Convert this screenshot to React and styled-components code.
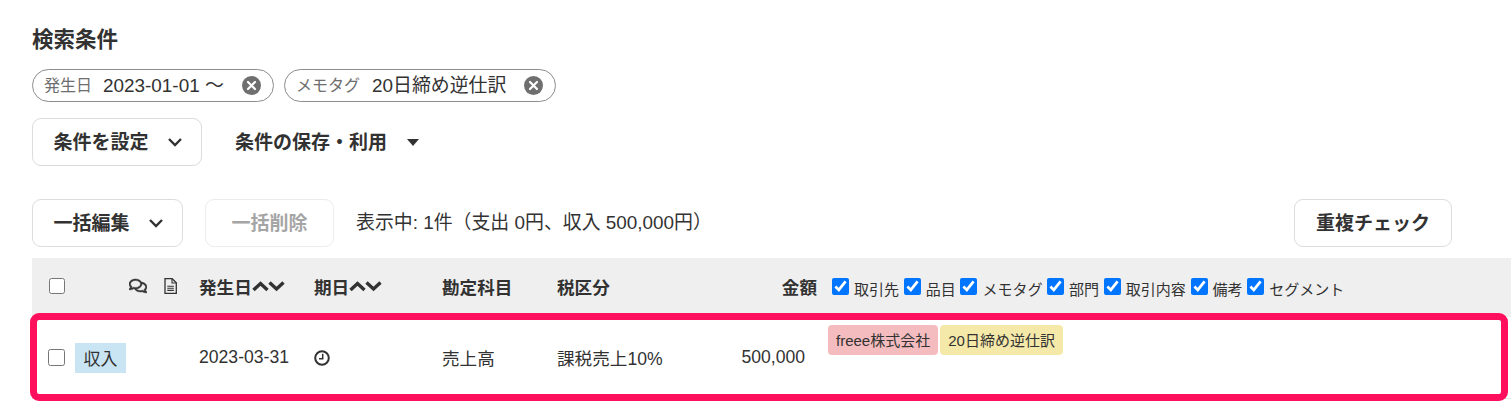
import React from 'react';
import styled, { createGlobalStyle } from 'styled-components';
import { FaRegComments } from 'react-icons/fa';

const GlobalStyle = createGlobalStyle`
  html, body {
    margin: 0;
    padding: 0;
    background: #fff;
  }
  body {
    font-family: "Liberation Sans", "Noto Sans CJK JP", sans-serif;
    color: #323232;
    overflow: hidden;
  }
`;

const Page = styled.div`
  width: 1511px;
  height: 406px;
  box-sizing: border-box;
  padding: 28px 0 0 32px;
`;

const Heading = styled.h2`
  margin: 0;
  font-size: 21.5px;
  line-height: 24px;
  font-weight: 700;
`;

const ChipRow = styled.div`
  display: flex;
  gap: 10px;
  margin-top: 17px;
`;

const Chip = styled.div`
  display: flex;
  align-items: center;
  box-sizing: border-box;
  width: ${(p) => p.$width}px;
  height: 33px;
  padding: 0 12px 0 11px;
  border: 1px solid #8c8c8c;
  border-radius: 17px;
`;

const ChipLabel = styled.span`
  font-size: 16px;
  color: #6e6e6e;
  margin-right: ${(p) => p.$gap}px;
  padding-bottom: 3px;
`;

const ChipValue = styled.span`
  font-size: 18.9px;
  flex: 1;
  white-space: nowrap;
  padding-bottom: 5px;
`;

const ButtonRow = styled.div`
  display: flex;
  align-items: center;
  margin-top: 16px;
`;

const Toolbar = styled(ButtonRow)`
  margin-top: 33px;
  padding-right: 59px;
`;

const Button = styled.button`
  display: flex;
  align-items: center;
  justify-content: center;
  box-sizing: border-box;
  height: 48px;
  width: ${(p) => p.$width}px;
  padding: 0 0 4px;
  background: #fff;
  border: 1px solid ${(p) => (p.disabled ? '#ececec' : '#dcdcdc')};
  border-radius: 9px;
  font-family: inherit;
  font-size: 19px;
  font-weight: 700;
  color: ${(p) => (p.disabled ? '#a5a5a5' : '#323232')};
`;

const MenuButton = styled(Button)`
  padding-left: 2px;
`;

const PlainButton = styled(Button)`
  border: none;
  margin-left: 33px;
  justify-content: flex-start;
`;

const Caret = styled.svg`
  margin-left: ${(p) => p.$gap}px;
  margin-top: 4px;
`;

const Summary = styled.span`
  font-size: 18.9px;
  margin-left: 22px;
  flex: 1;
  white-space: nowrap;
  padding-bottom: 5px;
`;

const DeleteButton = styled(Button)`
  margin-left: 22px;
`;

const Table = styled.div`
  margin-top: 11px;
`;

const HeaderRow = styled.div`
  display: flex;
  align-items: center;
  height: 59px;
  padding-bottom: 3px;
  box-sizing: border-box;
  background: #efefef;
`;

const BodyWrap = styled.div`
  position: relative;
`;

const BodyRow = styled.div`
  display: flex;
  height: 81px;
  border-bottom: 1px solid #e4e4e4;
`;

const Cell = styled.div`
  display: flex;
  align-items: center;
  flex: none;
  box-sizing: border-box;
  width: ${(p) => p.$width}px;
  justify-content: ${(p) => (p.$right ? 'flex-end' : 'flex-start')};
  font-size: 17.6px;
  font-weight: ${(p) => (p.$bold ? 700 : 400)};
  padding-left: ${(p) => p.$left || 0}px;
`;

const IconCell = styled(Cell)`
  gap: 17px;
`;

const Box = styled.input`
  flex: none;
  width: ${(p) => p.$size || 17}px;
  height: ${(p) => p.$size || 17}px;
  margin: 0;
  accent-color: #0075ff;
`;

const TypeBadge = styled.span`
  display: flex;
  align-items: center;
  justify-content: center;
  width: 51px;
  height: 30px;
  margin-left: 10px;
  background: #c9e4f2;
  font-size: 17px;
`;

const ColumnToggles = styled.div`
  display: flex;
  align-items: center;
  margin-left: 15px;
`;

const ToggleLabel = styled.label`
  display: flex;
  align-items: center;
  gap: 5px;
  margin-right: 4.7px;
  font-size: 15px;
  white-space: nowrap;

  span {
    position: relative;
    top: 2px;
  }
`;

const TagCell = styled.div`
  display: flex;
  gap: 2px;
  margin-left: 23px;
  padding-top: 8px;
  align-items: flex-start;
`;

const Tag = styled.span`
  display: flex;
  align-items: center;
  height: 30px;
  padding: 0 8px 2px;
  box-sizing: border-box;
  border-radius: 4px;
  font-size: 15px;
  background: ${(p) => p.$bg};
`;

// annotation drawn over the row in the screenshot
const Highlight = styled.div`
  position: absolute;
  left: -2px;
  right: 3px;
  top: -4px;
  height: 88px;
  box-sizing: border-box;
  border: 7px solid #ff0f5c;
  border-radius: 9px;
  pointer-events: none;
`;

const Chevron = ({ gap = 0, size = 16 }) => (
  <Caret $gap={gap} width={size} height={size * 0.625} viewBox="0 0 16 10" fill="none" stroke="#323232" strokeWidth="2.4">
    <path d="M2 2l6 6 6-6" />
  </Caret>
);

const SortArrows = () => (
  <svg width="33" height="12" viewBox="0 0 33 12" fill="none" stroke="#323232" strokeWidth="3.400">
    <path d="M1.500 10L8.500 3.500l7 6.500" />
    <path d="M17.500 2.500L24.500 9l7-6.500" />
  </svg>
);

const ClearIcon = () => (
  <svg width="19" height="19" viewBox="0 0 19 19">
    <circle cx="9.500" cy="9.500" r="9.500" fill="#6f6f6f" />
    <path d="M6 6l7 7M13 6l-7 7" stroke="#fff" strokeWidth="2.200" strokeLinecap="round" />
  </svg>
);

const ClockIcon = () => (
  <svg width="16" height="16" viewBox="0 0 16 16" fill="none" stroke="#323232" strokeWidth="2">
    <circle cx="8" cy="8" r="6.800" />
    <path d="M8.700 3.800v5H5" strokeWidth="1.500" />
  </svg>
);

const FileIcon = () => (
  <svg width="13" height="16" viewBox="0 0 13 16" fill="none" stroke="#323232" strokeWidth="1.300">
    <path d="M1 .7h7.200L12.300 4.800v10.500H1z" />
    <path d="M8 .7v4.300h4.300M3.300 8.200h6.600M3.300 10.300h6.600M3.300 12.400h6.600" strokeWidth="1.100" />
  </svg>
);

const toggles = ['取引先', '品目', 'メモタグ', '部門', '取引内容', '備考', 'セグメント'];

export default function App() {
  return (
    <Page>
      <GlobalStyle />
      <Heading>検索条件</Heading>
      <ChipRow>
        <Chip $width={242}>
          <ChipLabel $gap={11}>発生日</ChipLabel>
          <ChipValue>2023-01-01 ～</ChipValue>
          <ClearIcon />
        </Chip>
        <Chip $width={272}>
          <ChipLabel $gap={12}>メモタグ</ChipLabel>
          <ChipValue>20日締め逆仕訳</ChipValue>
          <ClearIcon />
        </Chip>
      </ChipRow>
      <ButtonRow>
        <MenuButton $width={170}>
          条件を設定
          <Chevron gap={18} />
        </MenuButton>
        <PlainButton $width={190}>
          条件の保存・利用
          <Caret $gap={20} width="12" height="7" viewBox="0 0 12 7">
            <path d="M0 0h12L6 7z" fill="#323232" />
          </Caret>
        </PlainButton>
      </ButtonRow>
      <Toolbar>
        <MenuButton $width={151}>
          一括編集
          <Chevron gap={18} />
        </MenuButton>
        <DeleteButton $width={129} disabled>
          一括削除
        </DeleteButton>
        <Summary>表示中: 1件（支出 0円、収入 500,000円）</Summary>
        <Button $width={158}>重複チェック</Button>
      </Toolbar>
      <Table>
        <HeaderRow>
          <Cell $width={97} $left={17}>
            <Box type="checkbox" $size={16} />
          </Cell>
          <IconCell $width={70}>
            <FaRegComments size={18} stroke="currentColor" strokeWidth={14} />
            <FileIcon />
          </IconCell>
          <Cell $width={115} $bold>
            発生日
            <SortArrows />
          </Cell>
          <Cell $width={128} $bold>
            期日
            <SortArrows />
          </Cell>
          <Cell $width={115} $bold>勘定科目</Cell>
          <Cell $width={110} $bold>税区分</Cell>
          <Cell $width={150} $right $bold>金額</Cell>
          <ColumnToggles>
            {toggles.map((name) => (
              <ToggleLabel key={name}>
                <Box type="checkbox" defaultChecked />
                <span>{name}</span>
              </ToggleLabel>
            ))}
          </ColumnToggles>
        </HeaderRow>
        <BodyWrap>
          <BodyRow>
            <Cell $width={167} $left={16}>
              <Box type="checkbox" />
              <TypeBadge>収入</TypeBadge>
            </Cell>
            <Cell $width={115}>2023-03-31</Cell>
            <Cell $width={128}>
              <ClockIcon />
            </Cell>
            <Cell $width={115}>売上高</Cell>
            <Cell $width={110}>課税売上10%</Cell>
            <Cell $width={138} $right>500,000</Cell>
            <TagCell>
              <Tag $bg="#f4bcbe">freee株式会社</Tag>
              <Tag $bg="#f5e9a9">20日締め逆仕訳</Tag>
            </TagCell>
          </BodyRow>
          <Highlight />
        </BodyWrap>
      </Table>
    </Page>
  );
}
